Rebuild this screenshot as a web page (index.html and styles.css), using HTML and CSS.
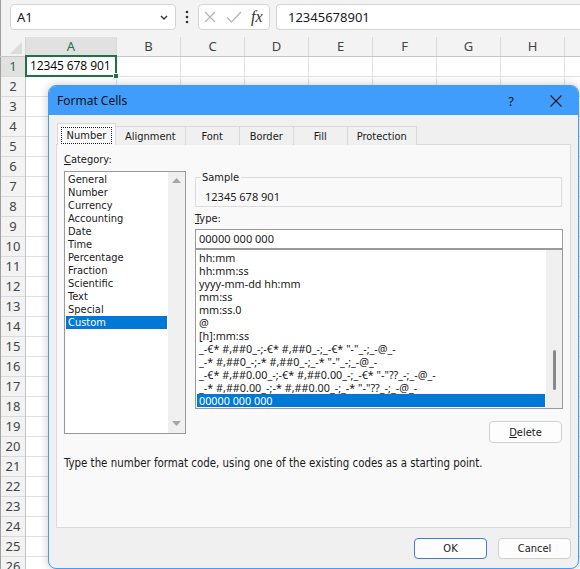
FILE: index.html
```html
<!DOCTYPE html>
<html lang="en">
<head>
    <meta charset="UTF-8">
    <meta name="viewport" content="width=device-width, initial-scale=1.0">
    <title>Format Cells</title>
    <link rel="stylesheet" href="styles.css">
</head>
<body>
<div class="app">
    <!-- Formula bar -->
    <div class="formula-bar">
        <div class="name-box">
            <span>A1</span>
            <svg width="8" height="5" viewBox="0 0 8 5"><path d="M1 1 L4 4 L7 1" fill="none" stroke="#333" stroke-width="1.4"/></svg>
        </div>
        <div class="bar-dots">
            <svg width="4" height="14" viewBox="0 0 4 14"><circle cx="2" cy="2" r="1.3"/><circle cx="2" cy="7" r="1.3"/><circle cx="2" cy="12" r="1.3"/></svg>
        </div>
        <div class="fx-box">
            <svg width="12" height="12" viewBox="0 0 12 12"><path d="M1 1 L11 11 M11 1 L1 11" stroke="#b3b3b3" stroke-width="1.2" fill="none"/></svg>
            <svg class="fx-check" width="16" height="12" viewBox="0 0 16 12"><path d="M1 6.5 L5.5 11 L15 1" stroke="#b3b3b3" stroke-width="1.2" fill="none"/></svg>
            <span class="fx">fx</span>
        </div>
        <div class="formula-input">12345678901</div>
    </div>

    <!-- Column headers -->
    <div class="col-heads">
        <div class="corner"></div>
        <div class="col-head wide active">A</div>
        <div class="col-head">B</div>
        <div class="col-head">C</div>
        <div class="col-head">D</div>
        <div class="col-head">E</div>
        <div class="col-head">F</div>
        <div class="col-head">G</div>
        <div class="col-head">H</div>
        <div class="col-head">I</div>
    </div>

    <!-- Sheet -->
    <div class="sheet">
        <div class="row-heads">
            <div class="row-head active">1</div>
            <div class="row-head">2</div>
            <div class="row-head">3</div>
            <div class="row-head">4</div>
            <div class="row-head">5</div>
            <div class="row-head">6</div>
            <div class="row-head">7</div>
            <div class="row-head">8</div>
            <div class="row-head">9</div>
            <div class="row-head">10</div>
            <div class="row-head">11</div>
            <div class="row-head">12</div>
            <div class="row-head">13</div>
            <div class="row-head">14</div>
            <div class="row-head">15</div>
            <div class="row-head">16</div>
            <div class="row-head">17</div>
            <div class="row-head">18</div>
            <div class="row-head">19</div>
            <div class="row-head">20</div>
            <div class="row-head">21</div>
            <div class="row-head">22</div>
            <div class="row-head">23</div>
            <div class="row-head">24</div>
            <div class="row-head">25</div>
            <div class="row-head">26</div>
        </div>
        <div class="col-a-cells">
            <div class="cell-a1">12345 678 901<span class="fill-handle"></span></div>
        </div>
        <div class="rest-cells"></div>
    </div>

    <!-- Format Cells dialog -->
    <div class="dialog">
        <div class="dlg-title">
            <span class="dlg-title-text">Format Cells</span>
            <span class="dlg-help">?</span>
            <span class="dlg-close">
                <svg width="12" height="12" viewBox="0 0 12 12"><path d="M0.5 0.5 L11.5 11.5 M11.5 0.5 L0.5 11.5" stroke="#1a1a1a" stroke-width="1.1" fill="none"/></svg>
            </span>
        </div>
        <div class="dlg-body">
            <div class="tabs">
                <div class="tab active"><span class="focus">Number</span></div>
                <div class="tab">Alignment</div>
                <div class="tab">Font</div>
                <div class="tab">Border</div>
                <div class="tab">Fill</div>
                <div class="tab">Protection</div>
            </div>
            <div class="panel">
                <div class="panel-main">
                    <div class="cat-col">
                        <div class="label"><u>C</u>ategory:</div>
                        <div class="listbox cat-list">
                            <div class="list-items">
                                <div class="item">General</div>
                                <div class="item">Number</div>
                                <div class="item">Currency</div>
                                <div class="item">Accounting</div>
                                <div class="item">Date</div>
                                <div class="item">Time</div>
                                <div class="item">Percentage</div>
                                <div class="item">Fraction</div>
                                <div class="item">Scientific</div>
                                <div class="item">Text</div>
                                <div class="item">Special</div>
                                <div class="item selected">Custom</div>
                            </div>
                            <div class="vscroll arrows">
                                <svg width="9" height="5" viewBox="0 0 9 5"><path d="M0 5 L4.5 0 L9 5Z" fill="#a6a6a6"/></svg>
                                <svg width="9" height="5" viewBox="0 0 9 5"><path d="M0 0 L4.5 5 L9 0Z" fill="#a6a6a6"/></svg>
                            </div>
                        </div>
                    </div>
                    <div class="type-col">
                        <fieldset class="sample">
                            <legend>Sample</legend>
                            <div class="sample-value">12345 678 901</div>
                        </fieldset>
                        <div class="label type-label"><u>T</u>ype:</div>
                        <div class="type-input">00000 000 000</div>
                        <div class="listbox type-list">
                            <div class="list-items">
                                <div class="item">hh:mm</div>
                                <div class="item">hh:mm:ss</div>
                                <div class="item">yyyy-mm-dd hh:mm</div>
                                <div class="item">mm:ss</div>
                                <div class="item">mm:ss.0</div>
                                <div class="item">@</div>
                                <div class="item">[h]:mm:ss</div>
                                <div class="item">_-€* #,##0_-;-€* #,##0_-;_-€* "-"_-;_-@_-</div>
                                <div class="item">_-* #,##0_-;-* #,##0_-;_-* "-"_-;_-@_-</div>
                                <div class="item">_-€* #,##0.00_-;-€* #,##0.00_-;_-€* "-"??_-;_-@_-</div>
                                <div class="item">_-* #,##0.00_-;-* #,##0.00_-;_-* "-"??_-;_-@_-</div>
                                <div class="item selected">00000 000 000</div>
                            </div>
                            <div class="vscroll">
                                <span class="thumb"></span>
                            </div>
                        </div>
                        <div class="btn-row">
                            <button class="btn"><u>D</u>elete</button>
                        </div>
                    </div>
                </div>
                <p class="hint">Type the number format code, using one of the existing codes as a starting point.</p>
            </div>
            <div class="dlg-buttons">
                <button class="btn default">OK</button>
                <button class="btn">Cancel</button>
            </div>
        </div>
    </div>
</div>
</body>
</html>
```

FILE: styles.css
```css
/* General page styling */
* {
    box-sizing: border-box;
}

body {
    margin: 0;
    font-family: "Noto Sans", sans-serif;
    color: #1a1a1a;
    background-color: #fff;
}

.app {
    position: relative;
    width: 580px;
    height: 569px;
    overflow: hidden;
    background-color: #fff;
}

/* Formula bar */
.formula-bar {
    display: flex;
    align-items: flex-start;
    height: 37px;
    padding: 4px 0 0 9px;
    background-color: #f3f3f3;
    border-left: 1px solid #a0a0a0;
}

.name-box {
    display: flex;
    align-items: center;
    justify-content: space-between;
    width: 166px;
    height: 26px;
    padding: 0 7px 0 6px;
    background-color: #fff;
    border: 1px solid #d5d5d5;
    border-radius: 4px;
    font-size: 13px;
}

.bar-dots {
    display: flex;
    align-items: center;
    justify-content: center;
    width: 22px;
    height: 26px;
    fill: #333;
}

.fx-box {
    display: flex;
    align-items: center;
    width: 72px;
    height: 26px;
    padding-left: 5px;
    background-color: #fff;
    border: 1px solid #d5d5d5;
    border-radius: 4px;
}

.fx-check {
    margin-left: 10px;
}

.fx {
    margin-left: 9px;
    font-family: "Liberation Serif", serif;
    font-style: italic;
    font-size: 16px;
    color: #333;
}

.formula-input {
    flex: 1;
    height: 26px;
    margin-left: 6px;
    padding-left: 11px;
    background-color: #fff;
    border: 1px solid #d5d5d5;
    border-right: none;
    border-radius: 4px 0 0 4px;
    font-size: 13px;
    line-height: 24px;
    white-space: nowrap;
}

/* Column headers */
.col-heads {
    display: flex;
    height: 20px;
    background-color: #f3f3f3;
    border-bottom: 1px solid #c6c6c6;
}

.corner {
    position: relative;
    flex: none;
    width: 26px;
    border-left: 1px solid #a0a0a0;
    border-right: 1px solid #d4d4d4;
}

.corner::after {
    content: "";
    position: absolute;
    right: 3px;
    bottom: 2px;
    border-left: 12px solid transparent;
    border-bottom: 12px solid #dcdcdc;
}

.col-head {
    flex: none;
    width: 64px;
    text-align: center;
    font-size: 13px;
    line-height: 19px;
    color: #444;
    border-right: 1px solid #dadada;
}

.col-head.wide {
    width: 91px;
}

.col-head.active {
    background-color: #e1e1e1;
    color: #1f7246;
}

/* Sheet grid */
.sheet {
    display: flex;
    height: 512px;
}

.row-heads {
    flex: none;
    width: 26px;
    background-color: #f3f3f3;
    border-left: 1px solid #a0a0a0;
    border-right: 1px solid #c6c6c6;
}

.row-head {
    height: 20px;
    text-align: center;
    font-size: 13px;
    line-height: 19px;
    color: #444;
    border-bottom: 1px solid #dadada;
}

.row-head.active {
    background-color: #e1e1e1;
    color: #1f7246;
}

.col-a-cells {
    flex: none;
    width: 91px;
    border-right: 1px solid #e1e1e1;
    background-image: linear-gradient(to bottom, transparent 19px, #e1e1e1 19px);
    background-size: 100% 20px;
}

.rest-cells {
    flex: 1;
    background-image:
        linear-gradient(to bottom, transparent 19px, #e1e1e1 19px),
        linear-gradient(to right, transparent 63px, #e1e1e1 63px);
    background-size: 100% 20px, 64px 100%;
}

.cell-a1 {
    position: relative;
    height: 22px;
    margin: -2px -1px 0 -1px;
    padding-left: 3px;
    background-color: #fff;
    border: 2px solid #1f7246;
    font-family: "Open Sans", sans-serif;
    font-size: 12px;
    line-height: 18px;
    letter-spacing: -0.1px;
    color: #000;
    white-space: nowrap;
}

.fill-handle {
    position: absolute;
    right: -4px;
    bottom: -4px;
    width: 6px;
    height: 6px;
    background-color: #1f7246;
    border: 1px solid #fff;
}

/* Dialog */
.dialog {
    position: absolute;
    left: 48px;
    top: 85px;
    width: 531px;
    height: 484px;
    display: flex;
    flex-direction: column;
    background-color: #f0f0f0;
    border: 1px solid #409dfc;
    border-radius: 8px;
    overflow: hidden;
    box-shadow: 0 0 10px rgba(0, 0, 0, 0.22);
    font-family: "DejaVu Sans Condensed", "DejaVu Sans", sans-serif;
    font-stretch: condensed;
    font-size: 11px;
}

.dlg-title {
    flex: none;
    display: flex;
    align-items: center;
    height: 29px;
    padding-left: 8px;
    background-color: #409dfc;
    font-family: "Noto Sans", sans-serif;
    font-stretch: normal;
    font-size: 12px;
    color: #111;
}

.dlg-title-text {
    flex: 1;
}

.dlg-help {
    width: 44px;
    text-align: center;
    font-size: 13px;
}

.dlg-close {
    display: flex;
    justify-content: center;
    width: 45px;
}

.dlg-body {
    padding: 8px 7px 0;
}

.tabs {
    display: flex;
    align-items: flex-end;
    height: 22px;
    padding-left: 1px;
}

.tab {
    display: flex;
    align-items: center;
    justify-content: center;
    height: 19px;
    min-width: 55px;
    padding: 0 9px;
    margin-left: -1px;
    background-color: #f0f0f0;
    border: 1px solid #d9d9d9;
    border-bottom: none;
}

.tab.active {
    position: relative;
    z-index: 1;
    width: 59px;
    height: 22px;
    padding: 2px 0 0;
    margin-left: 0;
    background-color: #f9f9f9;
    border-color: #dadada;
}

.focus {
    padding: 1px 5px;
    outline: 1px dotted #222;
}

.panel {
    height: 384px;
    margin-top: -1px;
    padding: 8px 7px 0;
    background-color: #f9f9f9;
    border: 1px solid #dadada;
}

.panel-main {
    display: flex;
    gap: 9px;
}

.label {
    height: 14px;
    line-height: 14px;
}

.cat-col {
    width: 122px;
}

.listbox {
    display: flex;
    background-color: #fff;
    border: 1px solid #9a9a9a;
}

.list-items {
    flex: 1;
    min-width: 0;
    padding: 1px;
    overflow: hidden;
}

.item {
    height: 13px;
    padding-left: 2px;
    line-height: 13px;
    white-space: nowrap;
}

.item.selected {
    background-color: #0078d7;
    color: #fff;
}

.vscroll {
    flex: none;
    width: 16px;
    background-color: #f0f0f0;
}

.cat-list {
    height: 263px;
    margin-top: 4px;
}

.cat-list .vscroll {
    width: 17px;
}

.vscroll.arrows {
    display: flex;
    flex-direction: column;
    align-items: center;
    justify-content: space-between;
    padding: 6px 0 7px;
}

.vscroll svg {
    display: block;
}

.type-col {
    width: 368px;
}

.sample {
    width: 367px;
    margin: 18px 0 0;
    padding: 6px 8px 3px 9px;
    border: 1px solid #dcdcdc;
    min-width: 0;
}

.sample legend {
    margin-left: -5px;
    padding: 0 2px;
    line-height: 13px;
}

.sample-value,
.type-input,
.type-list .list-items {
    font-family: "Noto Sans", sans-serif;
    font-stretch: normal;
    font-size: 11px;
}

.type-list .list-items {
    font-size: 10.8px;
}

.sample-value {
    line-height: 13px;
}

.type-label {
    margin-top: 5px;
}

.type-input {
    height: 20px;
    margin-top: 3px;
    padding-left: 3px;
    background-color: #fff;
    border: 1px solid #9a9a9a;
    line-height: 18px;
}

.type-list {
    height: 160px;
}

.thumb {
    display: block;
    width: 3px;
    height: 40px;
    margin: 100px 0 0 7px;
    background-color: #8a8a8a;
    border-radius: 2px;
}

.btn-row {
    display: flex;
    justify-content: flex-end;
    margin-top: 12px;
    padding-right: 1px;
}

.btn {
    width: 73px;
    height: 22px;
    padding: 0;
    font-family: inherit;
    font-stretch: inherit;
    font-size: 11px;
    color: #1a1a1a;
    background-color: #fdfdfd;
    border: 1px solid #d0d0d0;
    border-radius: 4px;
}

.btn.default {
    border-color: #3d7fd8;
}

.hint {
    margin: 13px 0 0;
    font-size: 11.4px;
    line-height: 14px;
}

.dlg-buttons {
    display: flex;
    justify-content: flex-end;
    gap: 11px;
    margin-top: 10px;
}

.dlg-buttons .btn {
    height: 21px;
}
```
